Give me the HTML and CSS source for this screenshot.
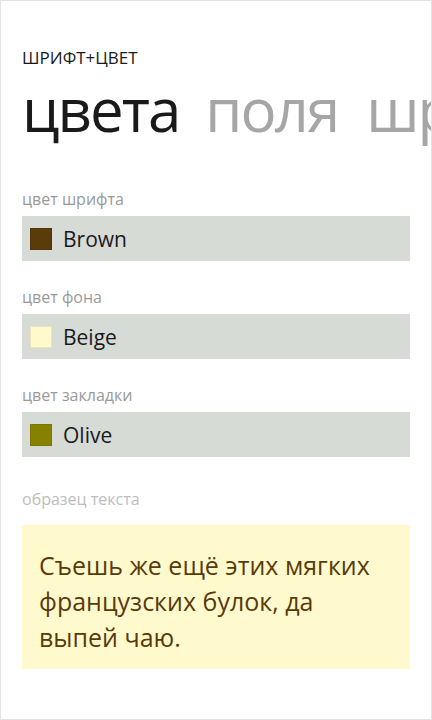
FILE: index.html
```html
<!DOCTYPE html>
<html lang="ru">
<head>
<meta charset="utf-8">
<link rel="stylesheet" href="styles.css">
</head>
<body>
<div class="page">
  <div class="app-title">ШРИФТ+ЦВЕТ</div>
  <div class="pivot">
    <span class="pivot-item active">цвета</span>
    <span class="pivot-item">поля</span>
    <span class="pivot-item">шрифт</span>
  </div>
  <div class="content">
    <div class="field">
      <div class="label">цвет шрифта</div>
      <div class="picker">
        <span class="swatch brown"></span>
        <span class="picker-text">Brown</span>
      </div>
    </div>
    <div class="field">
      <div class="label">цвет фона</div>
      <div class="picker">
        <span class="swatch beige"></span>
        <span class="picker-text">Beige</span>
      </div>
    </div>
    <div class="field">
      <div class="label">цвет закладки</div>
      <div class="picker">
        <span class="swatch olive"></span>
        <span class="picker-text">Olive</span>
      </div>
    </div>
    <div class="field sample-field">
      <div class="label light">образец текста</div>
      <div class="sample">Съешь же ещё этих мягких французских булок, да выпей чаю.</div>
    </div>
  </div>
</div>
</body>
</html>
```
FILE: styles.css
```css
html, body {
  margin: 0;
  padding: 0;
  background: #ffffff;
}
body {
  font-family: "Open Sans", "Noto Sans", sans-serif;
  color: #1a1a1a;
}
.page {
  box-sizing: border-box;
  width: 432px;
  height: 720px;
  border: 1px solid #e4e4e4;
  overflow: hidden;
  padding: 0 21px 0 21px;
}
.app-title {
  margin-top: 46px;
  font-size: 17px;
  line-height: 22px;
  color: #1a1a1a;
}
.pivot {
  white-space: nowrap;
  margin-right: -21px;
  overflow: hidden;
  font-size: 60px;
  font-weight: 400;
  letter-spacing: -2px;
  line-height: 80px;
  display: flex;
  gap: 26px;
}
.pivot-item {
  color: #a6a6a6;
}
.pivot-item.active {
  color: #1a1a1a;
}
.pivot-item.active + .pivot-item {
  margin-right: 2px;
}
.content {
  margin-top: 40px;
  display: flex;
  flex-direction: column;
  gap: 26px;
}
.label {
  font-size: 16px;
  line-height: 20px;
  color: #9a9a9a;
  margin-bottom: 7px;
}
.label.light {
  color: #bdbdbd;
}
.picker {
  width: 388px;
  height: 45px;
  background: #d7dbd6;
  display: flex;
  align-items: center;
  padding-left: 8px;
  box-sizing: border-box;
  gap: 11px;
}
.swatch {
  width: 22px;
  height: 22px;
  box-sizing: border-box;
  border: 1px solid rgba(0,0,0,0.08);
}
.swatch.brown { background: #5a3b0a; }
.swatch.beige { background: #fff9cc; }
.swatch.olive { background: #868200; }
.picker-text {
  font-size: 21px;
  color: #1a1a1a;
}
.sample-field {
  margin-top: 6px;
}
.sample-field .label {
  margin-bottom: 16px;
}
.sample {
  width: 388px;
  box-sizing: border-box;
  background: #fffacd;
  color: #5a3a0a;
  font-size: 25px;
  line-height: 36px;
  padding: 22px 17px 14px 17px;
}
```
